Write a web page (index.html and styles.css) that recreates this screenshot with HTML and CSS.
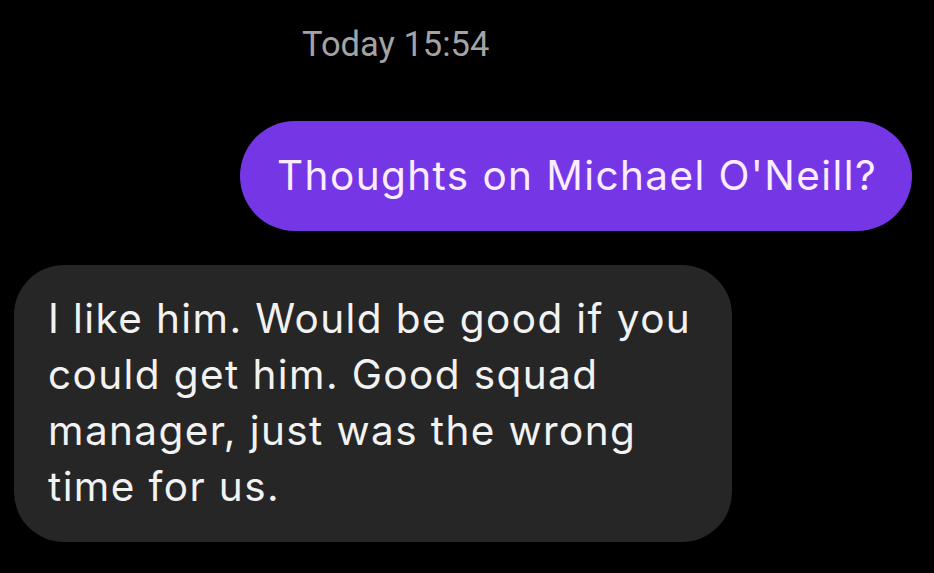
FILE: index.html
```html
<!DOCTYPE html>
<html lang="en">
<head>
  <meta charset="UTF-8" />
  <meta name="viewport" content="width=device-width, initial-scale=1.0">
  <title>Messages</title>
  <link rel="stylesheet" href="styles.css">
</head>
<body>

  <div class="thread">
    <div class="stamp">Today 15:54</div>

    <div class="row row-out">
      <div class="bubble bubble-out">Thoughts on Michael O'Neill?</div>
    </div>

    <div class="row row-in">
      <div class="bubble bubble-in">I like him. Would be good if you<br>could get him. Good squad<br>manager, just was the wrong<br>time for us.</div>
    </div>
  </div>

</body>
</html>
```

FILE: styles.css
```css
html, body {
  height: 100%;
  margin: 0;
  padding: 0;
}
*, *::before, *::after {
  box-sizing: border-box;
}
body {
  background: #000;
  font-family: Roboto, 'Noto Sans', sans-serif;
  overflow: hidden;
}

.thread {
  padding: 22px 22px 0 14px;
  display: flex;
  flex-direction: column;
}

.stamp {
  color: #a3a3a3;
  font-size: 34.5px;
  line-height: 44px;
  padding-left: 288px;
  margin-bottom: 55px;
}

.row {
  display: flex;
}

.row-out {
  justify-content: flex-end;
  margin-bottom: 34px;
}

.bubble {
  font-family: Inter, Roboto, sans-serif;
  font-size: 40.5px;
  line-height: 56px;
  letter-spacing: 1.4px;
}

.bubble-out {
  background: #7537e6;
  color: #fcecff;
  padding: 27px 35px 27px 37px;
  border-radius: 56px;
}

.bubble-in {
  background: #262626;
  color: #f2f2f2;
  width: 718px;
  padding: 26px 20px 27px 34px;
  border-radius: 50px;
}
```
